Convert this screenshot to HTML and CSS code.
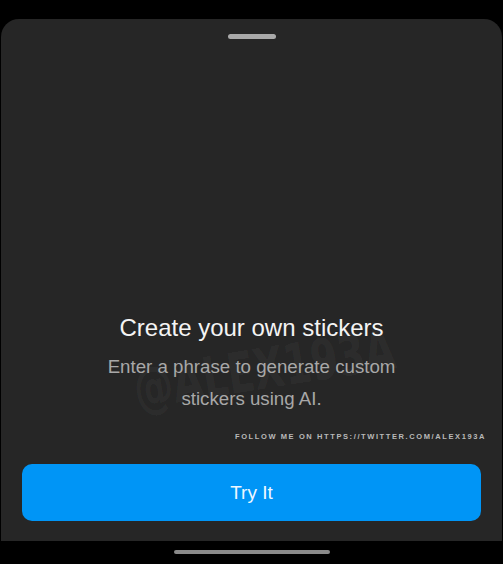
FILE: index.html
```html
<!DOCTYPE html>
<html>
<head>
<meta charset="utf-8">
<link rel="stylesheet" href="styles.css">
</head>
<body>
<div class="screen">
  <div class="sheet">
    <div class="handle"></div>
    <div class="spacer"></div>
    <div class="content">
      <h1 class="title">Create your own stickers</h1>
      <p class="subtitle">Enter a phrase to generate custom<br>stickers using AI.</p>
      <div class="watermark">@ALEX193A</div>
    </div>
    <div class="follow">FOLLOW ME ON HTTPS://TWITTER.COM/ALEX193A</div>
    <div class="actions">
      <button class="try">Try It</button>
    </div>
  </div>
  <div class="navbar"><div class="home"></div></div>
</div>
</body>
</html>
```
FILE: styles.css
```css
html, body {
  margin: 0;
  padding: 0;
  background: #000;
}
.screen {
  width: 503px;
  height: 564px;
  display: flex;
  flex-direction: column;
  font-family: "Liberation Sans", Arial, sans-serif;
  overflow: hidden;
}
.sheet {
  margin: 19px 1px 0 1px;
  height: 522px;
  background: #262626;
  border-radius: 18px 18px 0 0;
  display: flex;
  flex-direction: column;
  align-items: center;
}
.handle {
  margin-top: 15px;
  width: 48px;
  height: 5px;
  border-radius: 3px;
  background: #a9a9a9;
}
.spacer {
  flex: 1;
}
.content {
  position: relative;
  display: flex;
  flex-direction: column;
  align-items: center;
  text-align: center;
}
.title {
  margin: 0;
  font-size: 24px;
  font-weight: 400;
  color: #f4f4f4;
  line-height: 30px;
  position: relative;
  z-index: 1;
}
.subtitle {
  margin: 8px 0 0 0;
  font-size: 18.7px;
  line-height: 32px;
  color: #a8a8a8;
  position: relative;
  z-index: 1;
}
.watermark {
  position: absolute;
  left: 26px;
  top: 44px;
  font-family: "DejaVu Sans", sans-serif;
  font-weight: 700;
  font-size: 56px;
  color: rgba(255, 255, 255, 0.05);
  transform: rotate(-9deg) scaleX(0.7);
  transform-origin: left center;
  white-space: nowrap;
}
.follow {
  align-self: flex-end;
  margin: 17px 16px 0 0;
  font-size: 7.5px;
  letter-spacing: 1.6px;
  color: #b9b9b9;
  font-weight: 700;
}
.actions {
  align-self: stretch;
  padding: 23px 21px 20px 21px;
}
.try {
  display: block;
  width: 100%;
  height: 57px;
  border: none;
  border-radius: 10px;
  background: #0095f6;
  color: #eef7ff;
  font-family: "Liberation Sans", Arial, sans-serif;
  font-size: 19px;
  font-weight: 400;
}
.navbar {
  flex: 1;
  display: flex;
  justify-content: center;
  padding-top: 9px;
}
.home {
  width: 156px;
  height: 4px;
  border-radius: 2px;
  background: #8a8a8a;
}
```
